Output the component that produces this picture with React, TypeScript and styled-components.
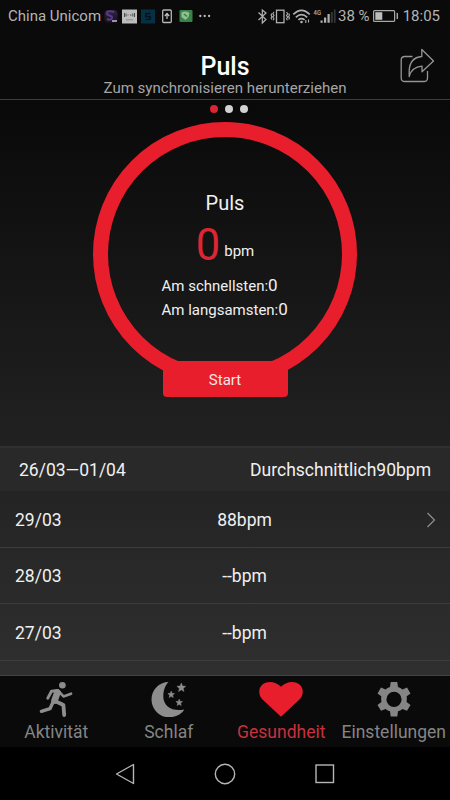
import React from "react";
import styled, { createGlobalStyle } from "styled-components";

const GlobalStyle = createGlobalStyle`
  * { box-sizing: border-box; }
  body { margin: 0; background: #000; }
  svg { display: block; flex: none; }
`;

const Screen = styled.div`
  width: 450px;
  height: 800px;
  display: flex;
  flex-direction: column;
  overflow: hidden;
  background: #000;
  color: #f0f0f0;
  font-family: Roboto, "Liberation Sans", sans-serif;
`;

const StatusBar = styled.div`
  height: 32px;
  flex: none;
  display: flex;
  align-items: center;
  justify-content: space-between;
  padding: 0 10px 0 8px;
  background: #0a0a0a;
  color: #b4b4b4;
  white-space: nowrap;
`;

const StatusGroup = styled.div`
  display: flex;
  align-items: center;
`;

const StatusText = styled.span<{ $width: number; $size: number }>`
  width: ${(p) => p.$width}px;
  font-size: ${(p) => p.$size}px;
  line-height: 20px;
`;

const Clock = styled(StatusText)`
  text-align: right;
`;

const Header = styled.header`
  height: 68px;
  flex: none;
  display: grid;
  grid-template-columns: 60px 1fr 60px;
  background: #0a0a0a;
  border-bottom: 1px solid #2b405c;
`;

const Heading = styled.div`
  grid-column: 2;
  padding-top: 19px;
  text-align: center;
`;

const Title = styled.h1`
  margin: 0;
  font-size: 25px;
  font-weight: 500;
  line-height: 31px;
  height: 30px;
  color: #fff;
`;

const Subtitle = styled.div`
  font-size: 15.05px;
  line-height: 15px;
  color: #a5a5a5;
  white-space: nowrap;
`;

const ShareButton = styled.button`
  align-self: start;
  margin: 16px 0 0 10px;
  padding: 0;
  width: 34px;
  border: 0;
  background: none;
`;

const Content = styled.main`
  height: 575px;
  flex: none;
  display: flex;
  flex-direction: column;
  overflow: hidden;
  background: linear-gradient(#090909, #202020 57%, #2f2f2f);
`;

const PulseSection = styled.section`
  height: 346px;
  flex: none;
  display: flex;
  flex-direction: column;
  align-items: center;
`;

const Pager = styled.div`
  height: 22px;
  flex: none;
  display: flex;
  gap: 7px;
  padding: 5px 0 0 7px;
`;

const PagerDot = styled.span<{ $active?: boolean }>`
  width: 8px;
  height: 8px;
  border-radius: 50%;
  background: ${(p) => (p.$active ? "#dc2532" : "#d2d2d2")};
`;

const Ring = styled.div`
  width: 264px;
  height: 264px;
  flex: none;
  display: flex;
  flex-direction: column;
  align-items: center;
  border: 15px solid #e81e2c;
  border-radius: 50%;
  padding-top: 54px;
`;

const RingTitle = styled.div`
  font-size: 20px;
  line-height: 24px;
`;

const Reading = styled.div`
  display: flex;
  align-items: flex-end;
  gap: 4px;
  height: 52px;
`;

const ReadingValue = styled.span`
  font-size: 43.5px;
  font-weight: 400;
  line-height: 42px;
  color: #dc2631;
`;

const ReadingUnit = styled.span`
  font-size: 15px;
  line-height: 31px;
`;

const Extremes = styled.div`
  width: 127px;
  padding-top: 6px;
  white-space: nowrap;
`;

const Extreme = styled.div`
  height: 24px;
  line-height: 24px;
  font-size: 15px;
`;

const ExtremeValue = styled.span`
  font-size: 17px;
`;

const StartButton = styled.button`
  width: 125px;
  height: 36px;
  margin-top: -25px;
  padding: 2px 0 0;
  border: 0;
  border-radius: 4px;
  background: #e81e2c;
  color: #f2e6e6;
  font: 15px Roboto, sans-serif;
  z-index: 1;
`;

const SummaryRow = styled.div`
  height: 45px;
  flex: none;
  display: flex;
  align-items: center;
  justify-content: space-between;
  padding: 1px 19px 0;
  border-top: 2px solid #303030;
  background: #292929;
  font-size: 17.5px;
`;

const DayRow = styled.div<{ $height: number }>`
  height: ${(p) => p.$height}px;
  flex: none;
  display: grid;
  grid-template-columns: 130px 199px 1fr;
  align-items: center;
  padding: 1px 14px 0 15px;
  border-bottom: 1px solid #3c3c3c;
  font-size: 17.5px;
`;

const DayValue = styled.div`
  text-align: center;
`;

const RowEnd = styled.div`
  display: flex;
  justify-content: flex-end;
`;

const TabBar = styled.nav`
  height: 72px;
  flex: none;
  display: grid;
  grid-template-columns: repeat(4, 112.5px);
  background: #0a0a0a;
  border-top: 1px solid #2b4666;
`;

const Tab = styled.button<{ $active?: boolean }>`
  display: flex;
  flex-direction: column;
  align-items: center;
  gap: 3px;
  padding: 5px 0 0;
  border: 0;
  background: none;
  color: ${(p) => (p.$active ? "#c8313c" : "#858585")};
  font: 17.5px/24px Roboto, sans-serif;
  white-space: nowrap;
`;

const SystemBar = styled.div`
  height: 53px;
  flex: none;
  display: flex;
  align-items: center;
  justify-content: center;
  gap: 76px;
  background: #000;
`;

const NotificationIcons = () => (
  <svg width="112" height="20" viewBox="102 5 112 20">
    <defs>
      <linearGradient id="violet" x1="0" y1="0" x2="0" y2="1">
        <stop offset="0" stopColor="#2f2546" />
        <stop offset="1" stopColor="#141119" />
      </linearGradient>
    </defs>
    <rect x="104.500" y="9" width="13" height="13" rx="4" fill="url(#violet)" />
    <path d="M114 11q-6-2-7 1c-1 3 6 2 5 5q-1 3-5 1" fill="none" stroke="#573a83" strokeWidth="2" />
    <path d="M112 20h5" stroke="#a9a3b2" strokeWidth="1.800" />
    <rect x="122" y="8.500" width="15" height="14" fill="#bcbcbc" />
    <path d="M124.500 12v4M134.500 12v4M126 12.500v3M127.500 14h1M130 14h1.500M132.800 12.500v3" stroke="#4c4c4c" strokeWidth="1" />
    <path d="M126 18.800h7" stroke="#8b8b8b" strokeWidth="1" />
    <rect x="141" y="8.500" width="14" height="14" fill="#073044" />
    <path d="M150.500 12.500h-4.500v3h3.500q1 0 1 1.500t-1.500 1.500h-3.500" fill="none" stroke="#02131f" strokeWidth="1.600" />
    <rect x="162.700" y="9" width="8.600" height="12.500" rx="1" fill="none" stroke="#b5b5b5" strokeWidth="1.300" />
    <path d="M167 18v-5M164.800 15l2.200-2.500 2.200 2.500" fill="none" stroke="#c5c5c5" strokeWidth="1.200" />
    <rect x="179.500" y="9" width="13" height="12" rx="1" fill="#388448" />
    <path d="M181.500 11.500q4-2 8 .5l-1 4-3 3-4-3z" fill="#93bd94" />
    <path d="M184 13l3 2.500M188 20h4" stroke="#328545" strokeWidth="1.500" />
    <g fill="#bcbcbc">
      <circle cx="200.300" cy="15" r="1.150" />
      <circle cx="204.700" cy="15" r="1.150" />
      <circle cx="209.100" cy="15" r="1.150" />
    </g>
  </svg>
);

const RadioIcons = () => (
  <svg width="82" height="20" viewBox="256 5 82 20" fill="none" stroke="#b0b0b0">
    <path d="M258.500 11.500l7.500 7-3.700 3.500V9l3.700 3-7.500 7" strokeWidth="1.200" />
    <rect x="276.500" y="9.200" width="7.500" height="12.500" strokeWidth="1.300" />
    <path d="M274 11l-1.200 1.700 1.200 1.700-1.200 1.700 1.200 1.700-1 1.500M271.800 12.500l-.7 1.500.7 1.500-.7 1.500.7 1.500M286.500 11l1.200 1.700-1.200 1.700 1.200 1.700-1.200 1.700 1 1.500M288.700 12.500l.7 1.500-.7 1.500.7 1.500-.7 1.500" strokeWidth="1.100" />
    <path d="M293.300 13.400q8.200-8.200 16.400 0M295.800 16.300q5.700-5.200 11.400 0M298.400 18.900q3.100-2.500 6.200 0" strokeWidth="1.700" />
    <circle cx="301.500" cy="21" r="1.300" fill="#b0b0b0" stroke="none" />
    <path d="M305.800 19v3M308.500 18.500v3" strokeWidth="1.100" />
    <text x="313.500" y="14" textLength="7.500" lengthAdjust="spacingAndGlyphs" fontFamily="Roboto, sans-serif" fontSize="8" fontWeight="500" fill="#b0b0b0" stroke="none">4G</text>
    <g stroke="none">
      <path d="M320.500 19.500h2.200v2.200h-2.200zM324 16.500h2.200v5.200H324zM327.500 13h2.200v8.700h-2.200z" fill="#b0b0b0" />
      <path d="M330.800 11h2v10.700h-2zM333.800 8.500h1.800v13.200h-1.800z" fill="#353535" />
    </g>
  </svg>
);

const BatteryIcon = () => (
  <svg width="27" height="14" viewBox="372 8 27 14">
    <rect x="373.600" y="9.600" width="21" height="10.800" rx="1" fill="none" stroke="#a8a8a8" strokeWidth="1.200" />
    <path d="M375.300 11.200h7v7.600h-7z" fill="#bdbdbd" />
    <path d="M397.300 12v6" stroke="#a8a8a8" strokeWidth="1.400" />
  </svg>
);

const ShareIcon = () => (
  <svg width="35" height="35" viewBox="400 48 35 35" fill="none" stroke="#959595" strokeWidth="1.300" strokeLinejoin="round">
    <path d="M412.500 56.500h-7.500q-3.800 0-3.800 3.500v18q0 3.500 3.800 3.500h18.800q3.700 0 3.700-3.500v-7" />
    <path d="M421.800 49.500L433.500 61 422 71.800v-5.600q-10.500 1-12.800 10.300v-5.500q.5-13.500 12.600-14.500z" />
  </svg>
);

const RunnerIcon = () => (
  <svg width="34" height="36" viewBox="39 681 34 36" fill="none" stroke="#8d8d8d" strokeLinecap="round" strokeLinejoin="round">
    <circle cx="62.400" cy="685.200" r="3.300" fill="#8d8d8d" stroke="none" />
    <path d="M57.800 690.500l-6.300.8-3.700 6.800" strokeWidth="3" />
    <path d="M58.800 691.500l4.700 4.900 7.600-2.700" strokeWidth="2.600" />
    <path d="M57.500 692.500l-3 8" strokeWidth="6.600" />
    <path d="M53.500 701l-3.500 7.700-8.600 2.600" strokeWidth="3.400" />
    <path d="M55 701l8.400 4 .8 10" strokeWidth="3.800" />
  </svg>
);

const MoonIcon = () => (
  <svg width="36" height="36" viewBox="151 681 36 36" fill="#8d8d8d">
    <path d="M168.500 682C159 682 151.500 690 151.500 699.500S159 717.300 169 717.300c6.500 0 12.500-3 15.300-7.800-12 2.500-21.300-3.500-21-13.500.2-6.500 2-10.500 5.200-14z" />
    <path d="M181.300 683l1.200 3 3.200.3-2.500 2.100.8 3.100-2.700-1.700-2.700 1.700.8-3.100-2.500-2.100 3.200-.3z" stroke="#8d8d8d" strokeWidth=".5" />
    <path d="M171.200 691.200l.9 2.200 2.400.2-1.900 1.500.6 2.400-2-1.300-2 1.300.6-2.400-1.900-1.500 2.400-.2z" stroke="#8d8d8d" strokeWidth=".6" />
    <path d="M179.200 699.200l.9 2.200 2.400.2-1.900 1.500.6 2.400-2-1.300-2 1.300.6-2.400-1.900-1.500 2.400-.2z" stroke="#8d8d8d" strokeWidth=".6" />
  </svg>
);

const HeartIcon = () => (
  <svg width="44" height="36" viewBox="259 681 44 36">
    <path d="M281 716.800l-18.500-17.300c-4-4-4.400-10.500-.8-14.200 5.500-5.500 14-3.800 19.300 1.500 5.300-5.300 13.800-7 19.300-1.500 3.600 3.700 3.200 10.200-.8 14.200z" fill="#e81e2c" />
  </svg>
);

const GearIcon = () => (
  <svg width="36" height="36" viewBox="376 681 36 36">
    <path
      fill="#858585"
      fillRule="evenodd"
      d="M390.700 682h6.600l.7 5q2.500.8 4.500 2.400l4.500-2 3.500 6-3.800 2.900q.3 3-.1 5.600l3.900 3-3.500 5.900-4.600-1.900q-2 1.600-4.400 2.400l-.7 5.200h-6.600l-.7-5.200q-2.400-.8-4.400-2.400l-4.600 1.900-3.500-5.900 3.900-3q-.4-2.600-.1-5.600l-3.800-2.900 3.500-6 4.500 2q2-1.600 4.500-2.400zM394 691.800a7.600 7.600 0 1 0 0 15.200 7.600 7.600 0 0 0 0-15.200z"
    />
  </svg>
);

const ChevronIcon = () => (
  <svg width="10" height="16" viewBox="0 0 10 16" fill="none" stroke="#909090" strokeWidth="1.200">
    <path d="M1.500 1l7 7-7 7" />
  </svg>
);

const days = [
  { date: "29/03", value: "88bpm", height: 57, link: true },
  { date: "28/03", value: "--bpm", height: 56, link: false },
  { date: "27/03", value: "--bpm", height: 57, link: false },
];

const tabs = [
  { label: "Aktivität", Icon: RunnerIcon },
  { label: "Schlaf", Icon: MoonIcon },
  { label: "Gesundheit", Icon: HeartIcon, active: true },
  { label: "Einstellungen", Icon: GearIcon },
];

export default function App() {
  return (
    <Screen>
      <GlobalStyle />
      <StatusBar>
        <StatusGroup>
          <StatusText $width={94} $size={15}>China Unicom</StatusText>
          <NotificationIcons />
        </StatusGroup>
        <StatusGroup>
          <RadioIcons />
          <StatusText $width={34} $size={15}>38 %</StatusText>
          <BatteryIcon />
          <Clock $width={41} $size={15}>18:05</Clock>
        </StatusGroup>
      </StatusBar>
      <Header>
        <Heading>
          <Title>Puls</Title>
          <Subtitle>Zum synchronisieren herunterziehen</Subtitle>
        </Heading>
        <ShareButton aria-label="Teilen"><ShareIcon /></ShareButton>
      </Header>
      <Content>
        <PulseSection>
          <Pager>
            <PagerDot $active />
            <PagerDot />
            <PagerDot />
          </Pager>
          <Ring>
            <RingTitle>Puls</RingTitle>
            <Reading>
              <ReadingValue>0</ReadingValue>
              <ReadingUnit>bpm</ReadingUnit>
            </Reading>
            <Extremes>
              <Extreme>Am schnellsten:<ExtremeValue>0</ExtremeValue></Extreme>
              <Extreme>Am langsamsten:<ExtremeValue>0</ExtremeValue></Extreme>
            </Extremes>
          </Ring>
          <StartButton>Start</StartButton>
        </PulseSection>
        <SummaryRow>
          <span>26/03—01/04</span>
          <span>Durchschnittlich90bpm</span>
        </SummaryRow>
        {days.map((day) => (
          <DayRow key={day.date} $height={day.height}>
            <span>{day.date}</span>
            <DayValue>{day.value}</DayValue>
            <RowEnd>{day.link && <ChevronIcon />}</RowEnd>
          </DayRow>
        ))}
      </Content>
      <TabBar>
        {tabs.map(({ label, Icon, active }) => (
          <Tab key={label} $active={active}>
            <Icon />
            <span>{label}</span>
          </Tab>
        ))}
      </TabBar>
      <SystemBar>
        <svg width="24" height="24" viewBox="0 0 24 24" fill="none" stroke="#b5b5b5" strokeWidth="1.400" strokeLinejoin="round">
          <path d="M20.500 2.500v19L3.500 12z" />
        </svg>
        <svg width="24" height="24" viewBox="0 0 24 24" fill="none" stroke="#b5b5b5" strokeWidth="1.400">
          <circle cx="12" cy="12" r="9.700" />
        </svg>
        <svg width="24" height="24" viewBox="0 0 24 24" fill="none" stroke="#b5b5b5" strokeWidth="1.400">
          <rect x="3" y="3" width="17.500" height="17.500" />
        </svg>
      </SystemBar>
    </Screen>
  );
}
